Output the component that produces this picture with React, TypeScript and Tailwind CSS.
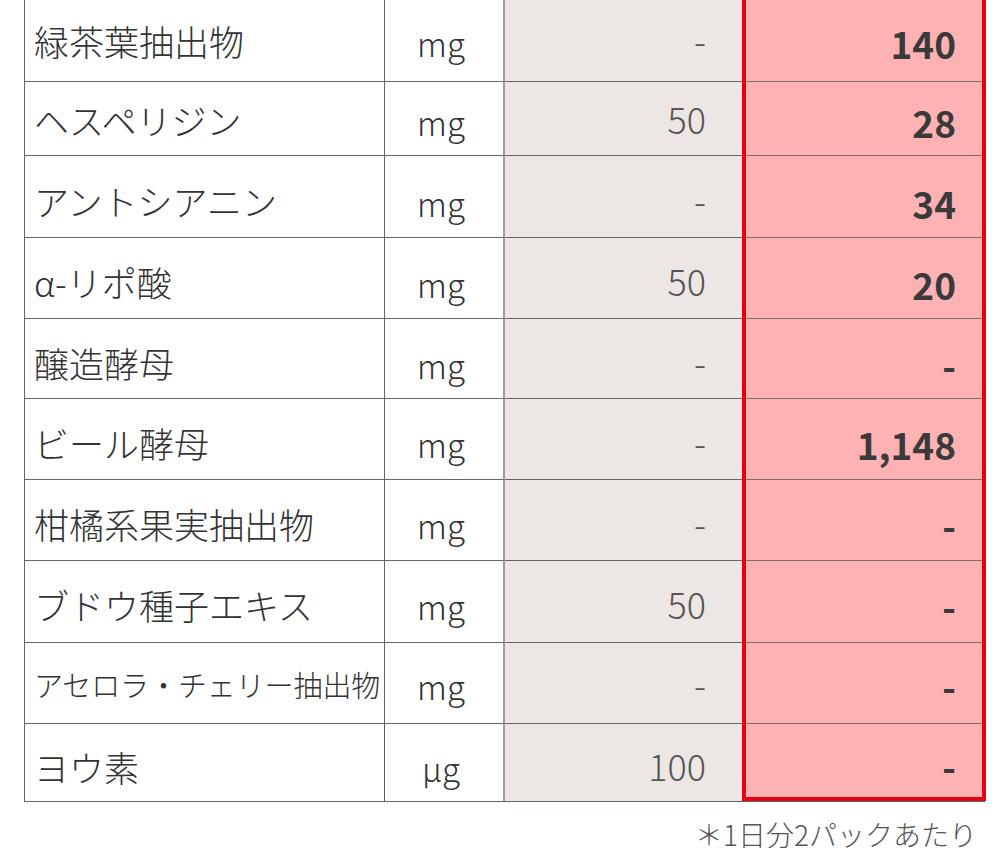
import React from 'react';

interface Row {
  name: string;
  unit: string;
  std: string;
  ours: string;
  box: string;
  small?: boolean;
}

// row heights include the 1px bottom line; pt nudges the text down like the source
const rows: Row[] = [
  { name: '緑茶葉抽出物', unit: 'mg', std: '-', ours: '140', box: 'h-[82px] pt-[5px]' },
  { name: 'ヘスペリジン', unit: 'mg', std: '50', ours: '28', box: 'h-[74px] pt-[7px]' },
  { name: 'アントシアニン', unit: 'mg', std: '-', ours: '34', box: 'h-[82px] pt-[13px]' },
  { name: 'α-リポ酸', unit: 'mg', std: '50', ours: '20', box: 'h-[81px] pt-[12px]' },
  { name: '醸造酵母', unit: 'mg', std: '-', ours: '-', box: 'h-[80px] pt-[13px]' },
  { name: 'ビール酵母', unit: 'mg', std: '-', ours: '1,148', box: 'h-[81px] pt-[11px]' },
  { name: '柑橘系果実抽出物', unit: 'mg', std: '-', ours: '-', box: 'h-[81px] pt-[11px]' },
  { name: 'ブドウ種子エキス', unit: 'mg', std: '50', ours: '-', box: 'h-[82px] pt-[10px]' },
  { name: 'アセロラ・チェリー抽出物', unit: 'mg', std: '-', ours: '-', box: 'h-[81px] pt-[7px]', small: true },
  { name: 'ヨウ素', unit: 'μg', std: '100', ours: '-', box: 'h-[77px] pt-[12px]' },
];

const font = { fontFamily: '"Noto Sans CJK JP", "Noto Sans", sans-serif' };

export default function App() {
  return (
    <div className="w-[1000px] h-[866px] bg-white" style={font}>
      <div className="ml-[24px] w-[961px] border-l border-b border-[#6b6461]">
        {rows.map((r, i) => {
          const last = i === rows.length - 1;
          const line = last ? '' : 'border-b border-[#6b6461]';
          return (
            <div key={i} className="grid grid-cols-[360px_120px_237px_244px]">
              <div className={`${r.box} ${line} pb-[5px] border-r border-[#5e5754] flex items-center pl-[9px] font-light text-[#333] ${r.small ? 'text-[29px] tracking-[-0.1px]' : 'text-[35px]'} leading-none whitespace-nowrap`}>
                {r.name}
              </div>
              <div className={`${r.box} ${line} border-r-2 border-r-[#a09994] flex items-center justify-center pr-[6px] text-[33px] font-light text-[#333] leading-none`}>
                {r.unit}
              </div>
              <div className={`${r.box} ${line} pb-[8px] bg-[#ece7e4] flex items-center justify-end pr-[36px] text-[36px] font-light text-[#555] leading-none`}>
                {r.std}
              </div>
              <div className={`${r.box} bg-[#ffb2b3] border-x-4 border-[#e60012] ${last ? 'border-b-4' : ''} p-0`}>
                <div className={`h-full flex items-center justify-end pr-[26px] text-[37px] font-bold text-[#3a3a3a] leading-none ${last ? '' : 'border-b border-[#7d6a69]'}`}>
                  {r.ours}
                </div>
              </div>
            </div>
          );
        })}
      </div>
      <div className="w-[977px] pt-[18px] text-right text-[28px] font-light text-[#555] leading-none">
        ＊1日分2パックあたり
      </div>
    </div>
  );
}
